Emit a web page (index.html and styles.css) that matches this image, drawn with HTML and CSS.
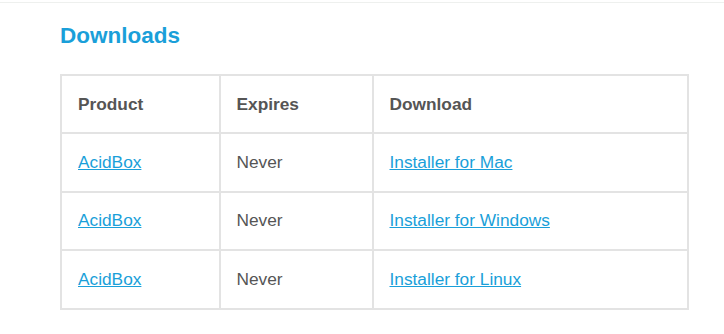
FILE: index.html
```html
<!DOCTYPE html>
<html>
<head>
<meta charset="utf-8">
<link rel="stylesheet" href="styles.css">
</head>
<body>
<div class="topbar"></div>
<main class="content">
  <h2 class="title">Downloads</h2>
  <table class="downloads">
    <colgroup>
      <col class="c1"><col class="c2"><col class="c3">
    </colgroup>
    <thead>
      <tr><th>Product</th><th>Expires</th><th>Download</th></tr>
    </thead>
    <tbody>
      <tr><td><a href="#">AcidBox</a></td><td>Never</td><td><a href="#">Installer for Mac</a></td></tr>
      <tr><td><a href="#">AcidBox</a></td><td>Never</td><td><a href="#">Installer for Windows</a></td></tr>
      <tr><td><a href="#">AcidBox</a></td><td>Never</td><td><a href="#">Installer for Linux</a></td></tr>
    </tbody>
  </table>
</main>
</body>
</html>
```
FILE: styles.css
```css
html, body {
  margin: 0;
  padding: 0;
  background: #fff;
}
body {
  font-family: "Liberation Sans", Arial, sans-serif;
  color: #555;
}
.topbar {
  height: 2px;
  border-bottom: 1px solid #eef0ee;
}
.content {
  padding: 20px 0 0 60px;
}
.title {
  margin: 0;
  font-size: 22.5px;
  line-height: 25px;
  font-weight: bold;
  color: #1a9fd9;
}
.downloads {
  margin-top: 26px;
  border-collapse: collapse;
  table-layout: fixed;
  width: 627px;
  border: 2px solid #e3e3e3;
  font-size: 17.3px;
}
.downloads th,
.downloads td {
  border: 2px solid #e3e3e3;
  padding: 0 0 0 16px;
  text-align: left;
  vertical-align: middle;
}
.downloads th {
  height: 56px;
  font-weight: bold;
  color: #555;
}
.downloads td {
  height: 56.5px;
  color: #555;
}
.c1 { width: 158.5px; }
.c2 { width: 153px; }
.c3 { width: 315.5px; }
.downloads a {
  color: #1a9fd9;
  text-decoration: underline;
}
```
